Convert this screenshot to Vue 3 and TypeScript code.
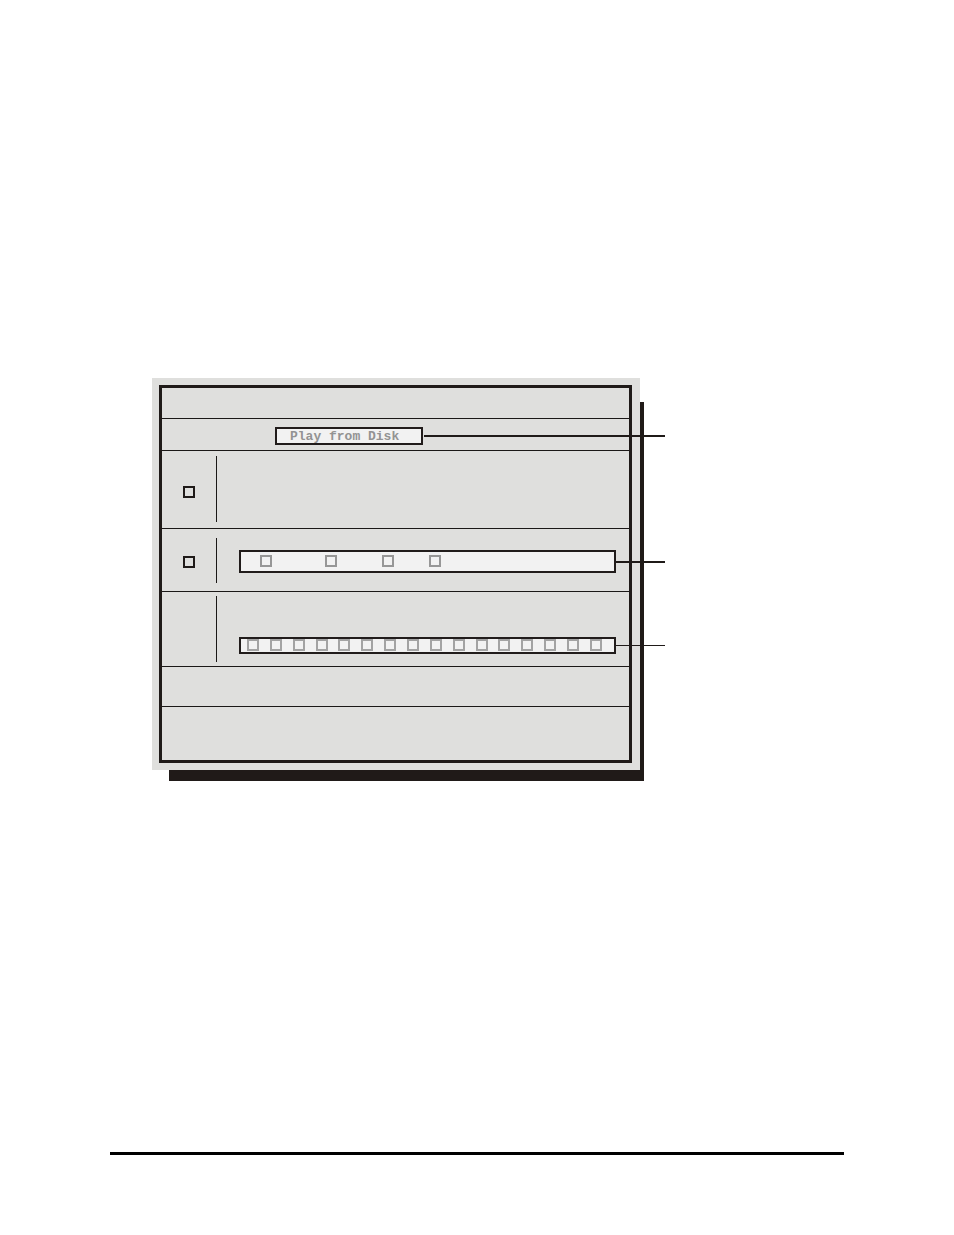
<script setup lang="ts">
import { ref } from 'vue'

const enabled = ref<boolean[]>([false, false])
const modes = ref<boolean[]>([false, false, false, false])
const channels = ref<boolean[]>(Array.from({ length: 16 }, () => false))
</script>

<template>
  <main class="page">
    <section class="screen">
      <div class="frame">
        <div class="row title"></div>
        <div class="row command">
          <button type="button" class="field command-button">Play from Disk</button>
          <span class="lead"></span>
        </div>
        <div class="row first">
          <div class="side">
            <input v-model="enabled[0]" type="checkbox" class="box dark" aria-label="First section" />
          </div>
          <div class="body"></div>
        </div>
        <div class="row second">
          <div class="side">
            <input v-model="enabled[1]" type="checkbox" class="box dark" aria-label="Second section" />
          </div>
          <div class="body">
            <div class="field modes">
              <input
                v-for="(_, i) in modes"
                :key="i"
                v-model="modes[i]"
                type="checkbox"
                class="box"
                :aria-label="`Mode ${i + 1}`"
              />
            </div>
            <span class="lead"></span>
          </div>
        </div>
        <div class="row third">
          <div class="side"></div>
          <div class="body">
            <div class="field channels">
              <input
                v-for="(_, i) in channels"
                :key="i"
                v-model="channels[i]"
                type="checkbox"
                class="box light"
                :aria-label="`Channel ${i + 1}`"
              />
            </div>
            <span class="lead thin"></span>
          </div>
        </div>
        <div class="row status"></div>
        <div class="row last"></div>
      </div>
    </section>
    <hr class="rule" />
  </main>
</template>

<style>
body {
  margin: 0;
  background: #fff;
}
</style>

<style scoped>
.page,
.page * {
  box-sizing: border-box;
}
.page {
  display: flex;
  flex-direction: column;
  min-height: 100vh;
  padding: 378px 110px 80px;
}
.screen {
  position: relative;
  margin: 0 204px 0 42px;
  padding: 7px 8px 7px 7px;
  background: #dfdfdd;
}
.screen::before {
  content: '';
  position: absolute;
  z-index: -1;
  top: 24px;
  right: -4px;
  bottom: -11px;
  left: 17px;
  background: #201a18;
}
.frame {
  border: 3px solid #1f1a18;
}
.row {
  display: flex;
  align-items: stretch;
  border-bottom: 1px solid #1b1817;
}
.title {
  min-height: 31px;
}
.command {
  min-height: 32px;
  align-items: center;
  padding: 2px 0 0 113px;
}
.first {
  min-height: 78px;
  padding: 5px 0 6px;
}
.second {
  min-height: 63px;
  padding: 9px 0 8px;
}
.third {
  min-height: 75px;
  padding: 4px 0;
}
.status {
  min-height: 40px;
}
.last {
  min-height: 53px;
  border-bottom: 0;
}
.side {
  display: flex;
  flex: 0 0 55px;
  align-items: center;
  padding: 6px 0 0 21px;
  border-right: 1px solid #1b1817;
}
.second .side {
  padding-top: 2px;
}
.body {
  display: flex;
  flex: 1;
  align-items: center;
  min-width: 0;
  padding-left: 22px;
}
.second .body {
  padding-top: 2px;
}
.third .body {
  align-items: flex-end;
  padding-bottom: 8px;
}
.field {
  border: 2px solid #211c1b;
  background: #f2f2f2;
}
.command-button {
  flex: 0 0 148px;
  height: 18px;
  margin: 0;
  padding: 1px 0 0 13px;
  border-radius: 0;
  color: #939393;
  font: bold 13px/13px 'Liberation Mono', 'Courier New', monospace;
  text-align: left;
  white-space: nowrap;
}
.lead {
  flex: 0 0 49px;
  height: 2px;
  margin-right: -36px;
  background: #1f1a18;
  z-index: 1;
}
.command .lead {
  flex: 1;
  margin-left: 1px;
}
.lead.thin {
  height: 1px;
  margin-bottom: 8px;
}
.modes,
.channels {
  display: flex;
  flex: 1;
  align-items: center;
  min-width: 0;
}
.modes {
  height: 23px;
  padding: 0 0 1px 19px;
}
.modes .box:nth-child(1) {
  margin-right: 53px;
}
.modes .box:nth-child(2) {
  margin-right: 45px;
}
.modes .box:nth-child(3) {
  margin-right: 35px;
}
.channels {
  justify-content: space-between;
  height: 17px;
  padding: 0 12px 1px 6px;
}
.box {
  appearance: none;
  flex: none;
  width: 12px;
  height: 12px;
  margin: 0;
  border: 2px solid #979797;
  border-radius: 0;
  background: transparent;
}
.box.dark {
  border-color: #1f1a18;
}
.box.light {
  border-color: #a3a3a3;
}
.box:checked {
  background: currentColor;
}
.rule {
  width: 100%;
  height: 3px;
  margin: auto 0 0;
  border: 0;
  background: #000;
}
</style>
